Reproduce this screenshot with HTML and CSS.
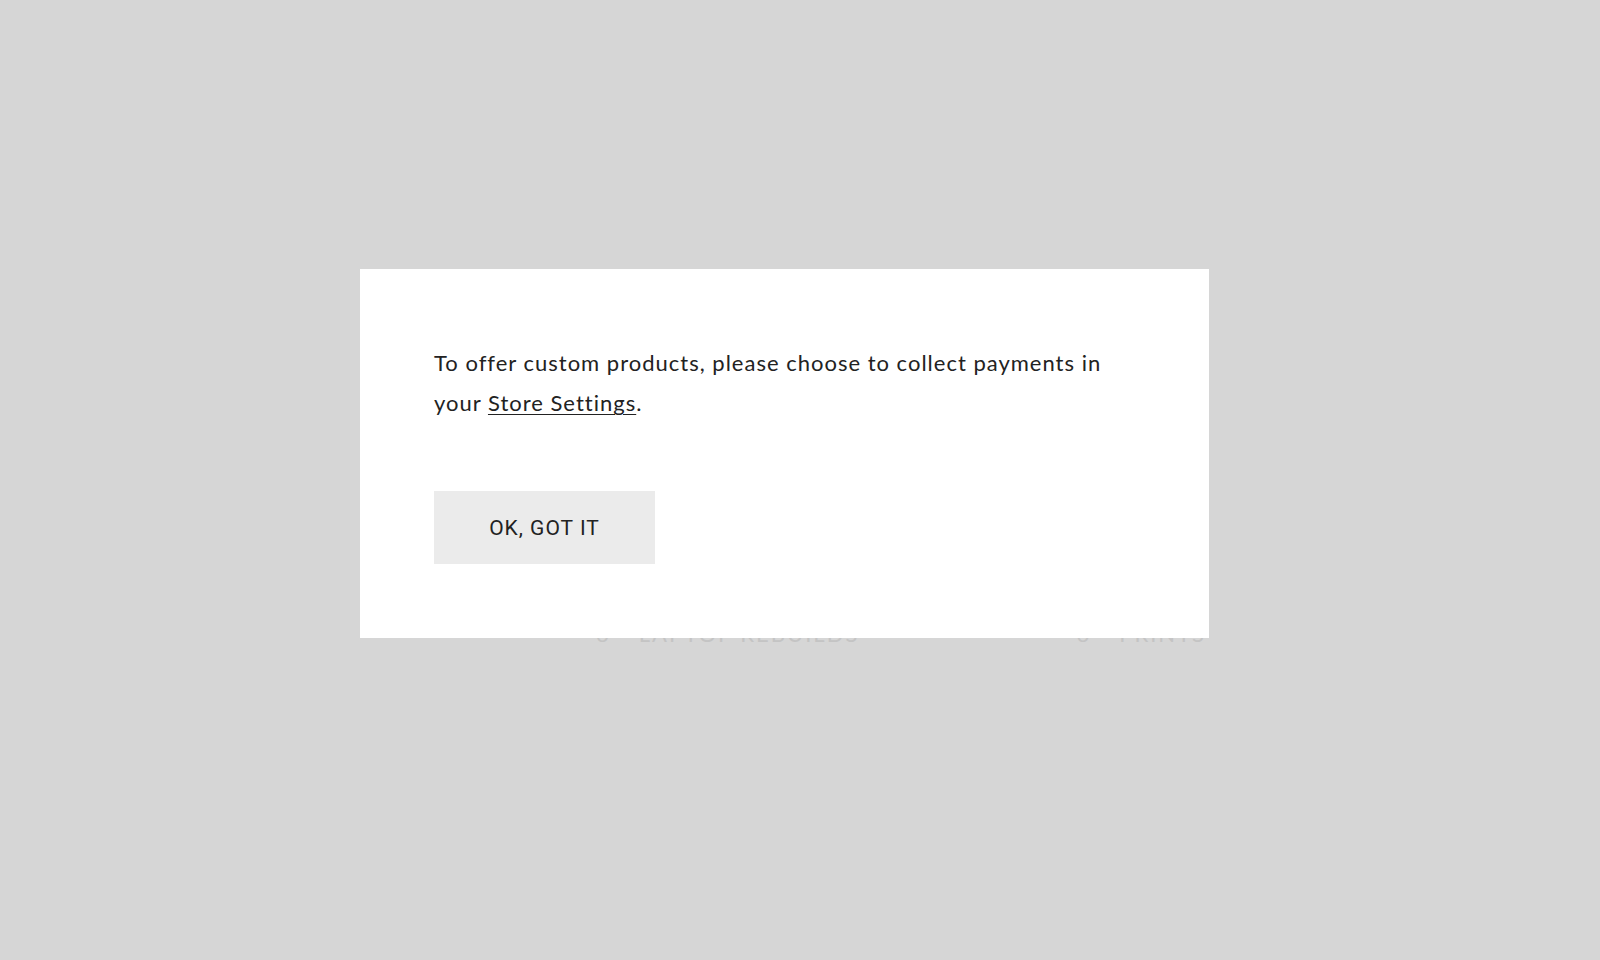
FILE: index.html
```html
<!DOCTYPE html>
<html lang="en">

<head>
  <meta charset="UTF-8" />
  <meta name="viewport" content="width=device-width, initial-scale=1.0" />
  <title>Store | Custom Products</title>
  <link rel="stylesheet" href="styles.css">
</head>

<body>
  <div class="pagina">
    <div class="lista-produtos">
      <div class="produto">
        <span class="produto-num">6</span>
        <span class="produto-nome">LAPTOP REBUILDS</span>
      </div>
      <div class="produto">
        <span class="produto-num">6</span>
        <span class="produto-nome">PRINTS</span>
      </div>
    </div>
  </div>

  <div class="aviso" id="avisoPagamentos">
    <p class="aviso-texto">
      To offer custom products, please choose to collect payments in your <a href="#" class="aviso-link">Store Settings</a>.
    </p>
    <button type="button" class="btn" id="fecharAviso">OK, GOT IT</button>
  </div>
</body>

</html>
```

FILE: styles.css
```css
body {
  margin: 0;
  font-family: "Lato", "Open Sans", sans-serif;
  background-color: #d6d6d6;
  min-height: 100vh;
}

/* Conteúdo atrás do aviso */
.pagina {
  padding-top: 620px;
}

.lista-produtos {
  display: flex;
  margin-left: 596px;
  width: 610px;
  justify-content: space-between;
  color: #c4c4c4;
  font-size: 22px;
  letter-spacing: 2px;
}

.produto {
  display: flex;
  gap: 28px;
}

/* Caixa do aviso */
.aviso {
  position: absolute;
  top: 269px;
  left: 360px;
  width: 849px;
  box-sizing: border-box;
  padding: 74px;
  background-color: #ffffff;
}

.aviso-texto {
  margin: 0 0 68px;
  font-size: 22px;
  line-height: 40px;
  letter-spacing: 1px;
  color: #222222;
}

.aviso-link {
  color: #222222;
  text-decoration: underline;
  text-underline-offset: 3px;
  text-decoration-thickness: 1px;
}

.btn {
  display: block;
  width: 221px;
  height: 73px;
  padding: 0;
  background-color: #ebebeb;
  color: #222222;
  font-family: "Roboto", sans-serif;
  font-size: 21px;
  letter-spacing: 1px;
  border: none;
  border-radius: 0;
  cursor: pointer;
}
```
